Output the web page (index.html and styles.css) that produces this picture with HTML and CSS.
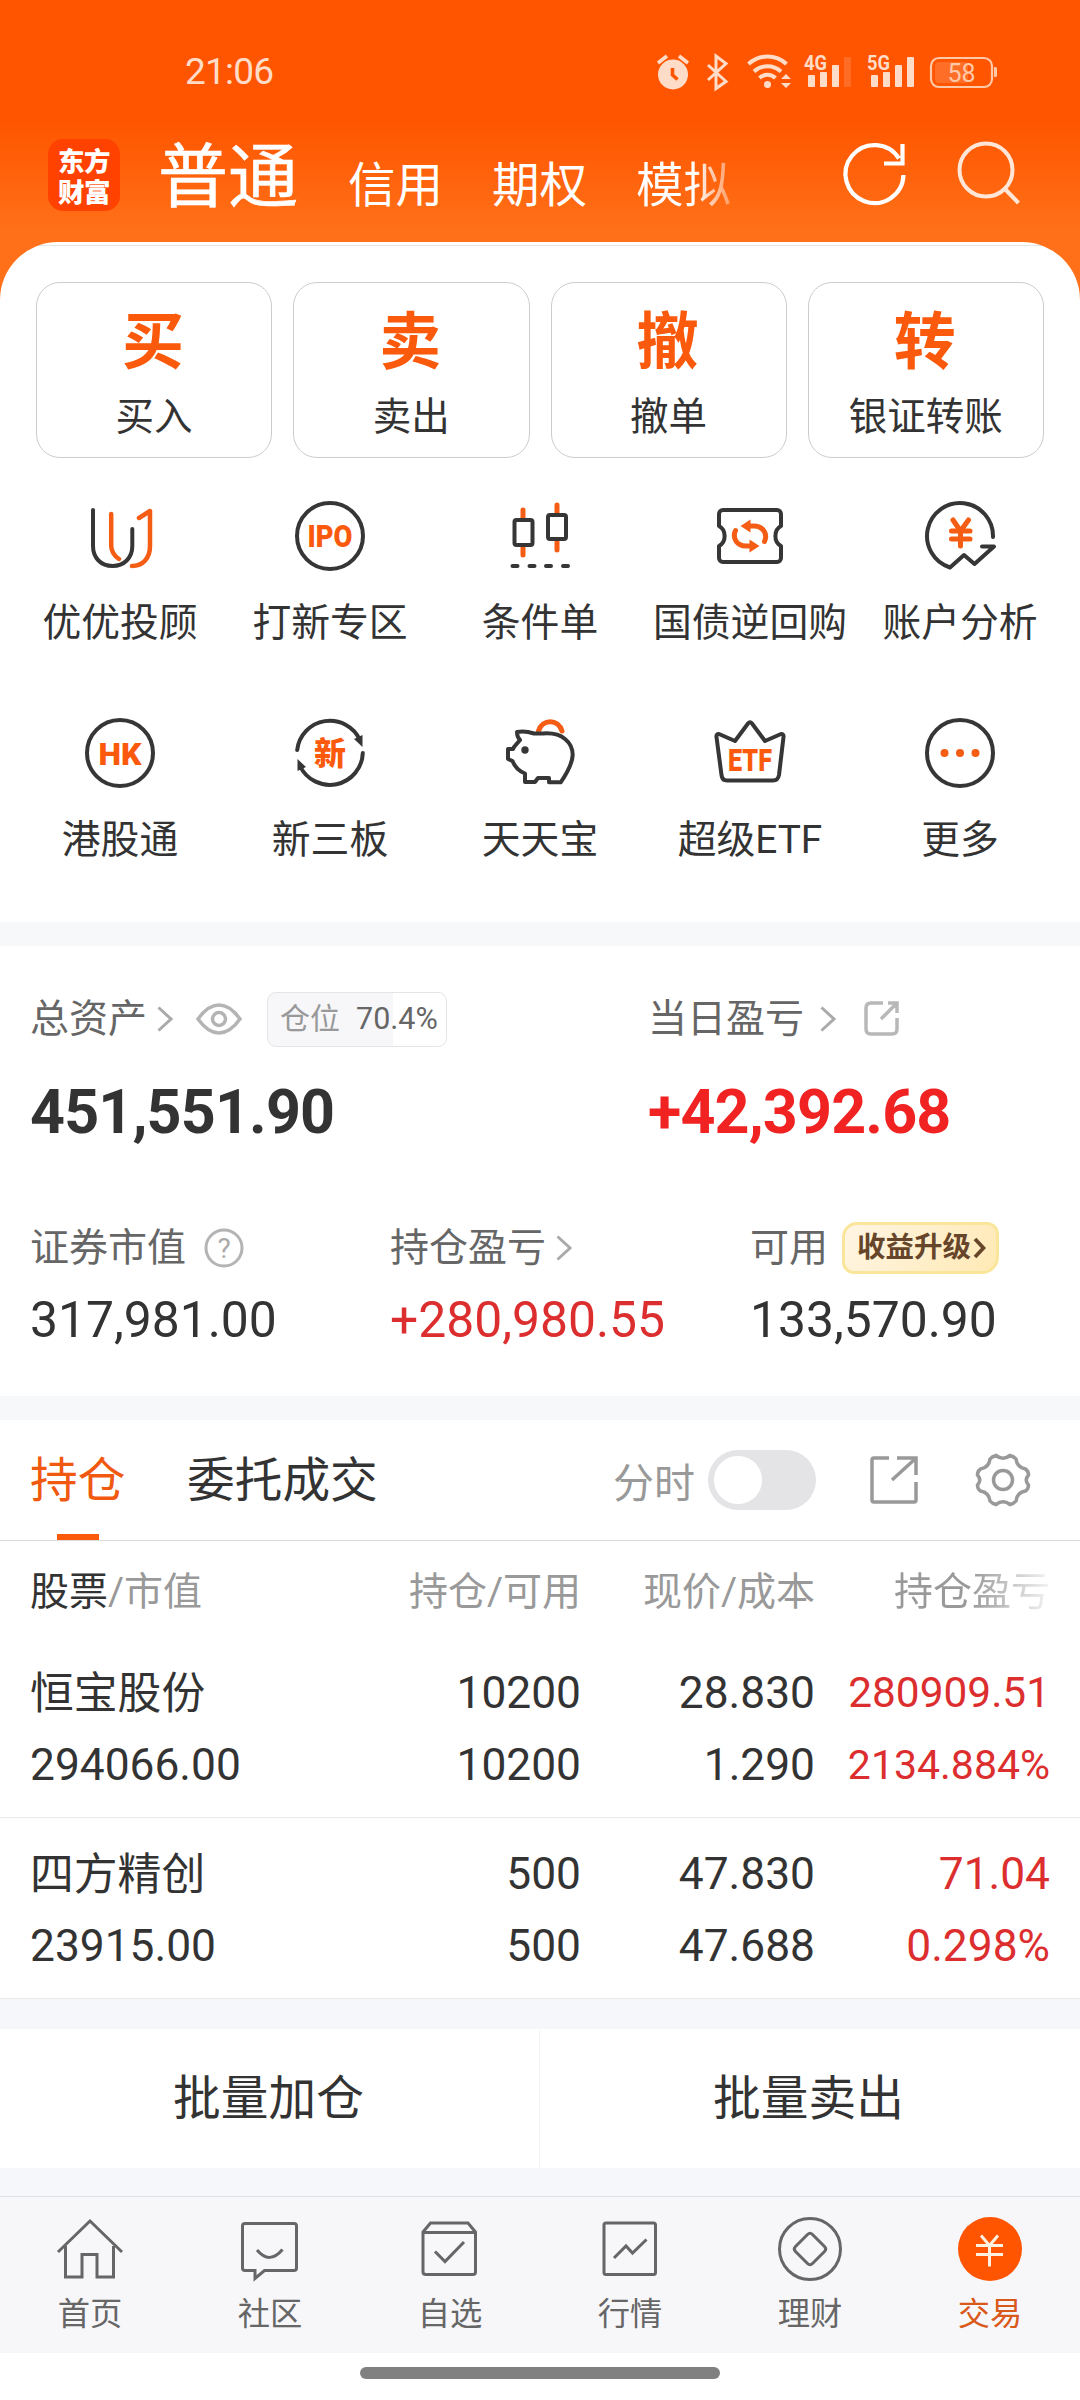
FILE: index.html
```html
<!DOCTYPE html>
<html lang="zh-CN">
<head>
<meta charset="utf-8">
<title>东方财富 交易</title>
<link rel="stylesheet" href="styles.css">
</head>
<body>
<header class="top">
  <div class="status">
    <span class="clock">21:06</span>
    <svg class="status-icons" viewBox="650 48 350 44" width="350" height="44">
      <g fill="#ffdcc8">
        <circle cx="673" cy="73.5" r="15"/>
        <path d="M658 62l9-7M688 62l-9-7" stroke="#ffdcc8" stroke-width="3.5"/>
        <path d="M672.5 67v7l5 4.500" fill="none" stroke="#ff5500" stroke-width="3.6"/>
        <path d="M708 64l18 16.500-10 7V55l10 7.500L708 79" fill="none" stroke="#ffdcc8" stroke-width="3"/>
        <path d="M748.500 63a28 28 0 0 1 38 0M754 70.500a20 20 0 0 1 27 0M759.500 77a11.500 11.500 0 0 1 16 0" fill="none" stroke="#ffdcc8" stroke-width="4"/>
        <circle cx="767.500" cy="83.500" r="3.500"/>
        <path d="M781 78l5-5 5 5zM781 82l5 5 5-5z"/>
        <text class="net" x="804" y="69" textLength="23" lengthAdjust="spacingAndGlyphs">4G</text>
        <rect x="808" y="74" width="7" height="12" rx="1"/><rect x="820" y="71" width="7" height="15" rx="1"/><rect x="832" y="64" width="7" height="22" rx="1"/><rect x="844" y="56" width="7" height="30" rx="1" opacity=".18"/>
        <text class="net" x="867" y="69" textLength="23" lengthAdjust="spacingAndGlyphs">5G</text>
        <rect x="871" y="74" width="7" height="12" rx="1"/><rect x="883" y="71" width="7" height="15" rx="1"/><rect x="895" y="64" width="7" height="22" rx="1"/><rect x="907" y="56" width="7" height="30" rx="1"/>
        <rect x="931" y="57" width="61" height="29" rx="8" fill="none" stroke="#ffc9a8" stroke-width="2.200"/>
        <rect x="935" y="61" width="33" height="21" rx="4" fill="#ff6e26"/>
        <path d="M994 66h1.500q1.500 0 1.500 1.500v7q0 1.500-1.500 1.500H994z" fill="#ffc9a8"/>
        <text class="batt" x="961.500" y="80.500" text-anchor="middle">58</text>
      </g>
    </svg>
  </div>
  <div class="bar">
    <div class="logo"><span>东方</span><span>财富</span></div>
    <nav class="modes"><span class="mode-on">普通</span><span>信用</span><span>期权</span><span class="fade">模拟</span></nav>
    <svg class="ic" width="72" height="72" fill="none" stroke="#fff" stroke-width="4.200"><path d="M64.500 36A29 29 0 1 1 60 19.500M63.500 5v19.500H45"/></svg>
    <svg class="ic" width="72" height="72" fill="none" stroke="#ffe6d6" stroke-width="4"><circle cx="33" cy="31" r="26.500"/><path d="M52 50l13.500 14"/></svg>
  </div>
</header>

<main>
<section class="sheet">
  <div class="cards">
    <div class="card"><b>买</b><span>买入</span></div>
    <div class="card"><b>卖</b><span>卖出</span></div>
    <div class="card"><b>撤</b><span>撤单</span></div>
    <div class="card"><b>转</b><span>银证转账</span></div>
  </div>
  <div class="tools">
    <div class="tool"><svg class="g" width="72" height="72"><path class="d" d="M9 10V46C9 58 17 66 28.500 66S48.300 58 48.300 46V29"/><path class="o" d="M27.200 14V46Q27.500 54 35 59M55 18L66 11V46C66 58 59 66 48 66"/></svg><span>优优投顾</span></div>
    <div class="tool"><svg class="g" width="72" height="72"><circle class="d" cx="36" cy="36" r="33"/><text x="36" y="47" textLength="45" lengthAdjust="spacingAndGlyphs">IPO</text></svg><span>打新专区</span></div>
    <div class="tool"><svg class="g" width="72" height="72"><path class="o thick" d="M19 10V18M19 47V55M53 5V13M53 42V50"/><rect class="d" x="10.500" y="20" width="18" height="25" rx="2"/><rect class="d" x="44" y="15" width="18" height="24" rx="2"/><path class="d" d="M8.500 66H13.500M25.500 66H30.500M42 66H47M59 66H64"/></svg><span>条件单</span></div>
    <div class="tool"><svg class="g" width="72" height="72"><path class="d" d="M9 10H63A4 4 0 0 1 67 14V26C59.500 30 59.500 42 67 46V58A4 4 0 0 1 63 62H9A4 4 0 0 1 5 58V46C12.500 42 12.500 30 5 26V14A4 4 0 0 1 9 10Z"/><path class="o thick" d="M36 26H40C49 26 54 34 50.500 41.500M36 46H32C23 46 18 38 21.500 30.500"/><path class="of" d="M26.500 26l10-6.500v13zM45.500 46l-10 6.500v-13z"/></svg><span>国债逆回购</span></div>
    <div class="tool"><svg class="g" width="72" height="72"><path class="d" d="M69 37A33 33 0 1 0 26 67.500L40 55L50.500 64L70 46.500H58"/><path class="o thick" d="M29 20L36.500 31L44.500 20M36.500 31V46M27.500 31H46M27.500 39H46"/></svg><span>账户分析</span></div>
    <div class="tool"><svg class="g" width="72" height="72"><circle class="d" cx="36" cy="36" r="33"/><text x="36" y="47.500" textLength="43" lengthAdjust="spacingAndGlyphs">HK</text></svg><span>港股通</span></div>
    <div class="tool"><svg class="g" width="72" height="72"><path class="d" d="M3.200 33A33 33 0 0 1 66 23M68.800 36A33 33 0 0 1 6 49"/><path class="df" d="M60 22l8.500-4 0 12zM12 50l-8.500 4 0-12z"/><text class="cn" x="36" y="48">新</text></svg><span>新三板</span></div>
    <div class="tool"><svg class="g" width="72" height="72"><path class="o thick" d="M34.500 14C38 1.500 54.500 1.500 58 14"/><path class="d body" d="M13 15Q21 13.500 30 16.500H39C59 15 68.700 26 68.700 38Q68 49 56.700 65.300H45V61H34L31 65H21V56.500Q12 53 8.500 44L4 42V32H9L10 30L16 23Q13 20 13 15Z"/><circle class="df" cx="21" cy="33" r="3.700"/></svg><span>天天宝</span></div>
    <div class="tool"><svg class="g" width="72" height="72"><path class="d" d="M5 17L21 24L34 6.500Q36 4 38 6.500L51 24L67 17Q70 17 69.500 20L65 58Q64 63.500 59 63.500H13Q8 63.500 7.500 58L2.500 20Q2 17 5 17Z"/><text x="36" y="53.500" textLength="44" lengthAdjust="spacingAndGlyphs">ETF</text></svg><span>超级ETF</span></div>
    <div class="tool"><svg class="g" width="72" height="72"><circle class="d" cx="36" cy="36" r="33"/><g class="of"><circle cx="20.500" cy="36" r="4"/><circle cx="36" cy="36" r="4"/><circle cx="51.500" cy="36" r="4"/></g></svg><span>更多</span></div>
  </div>
</section>

<section class="assets">
  <div class="row-main">
    <div>
      <div class="lab"><span>总资产</span><svg class="chev" width="16" height="26"><path d="M1.500 1.500L14 13L1.500 24.500"/></svg>
        <svg class="eye" width="46" height="34"><path d="M2 17Q12 3 23 3T44 17Q34 31 23 31T2 17Z"/><circle cx="23" cy="17" r="6.500"/></svg>
        <span class="pos"><em>仓位</em><i>70.4%</i></span></div>
      <div class="big">451,551.90</div>
    </div>
    <div>
      <div class="lab"><span>当日盈亏</span><svg class="chev far" width="16" height="26"><path d="M1.500 1.500L14 13L1.500 24.500"/></svg>
        <svg class="ext" width="36" height="36"><path d="M19 2H7Q2 2 2 7V28Q2 33 7 33H28Q33 33 33 28V17M24 2H33V12M33 2L17 18"/></svg></div>
      <div class="big red">+42,392.68</div>
    </div>
  </div>
  <div class="row-sub">
    <div><div class="lab"><span>证券市值</span><svg class="help" width="40" height="40"><circle cx="20" cy="20" r="18"/><text x="20" y="29.500">?</text></svg></div><div class="mid">317,981.00</div></div>
    <div><div class="lab"><span>持仓盈亏</span><svg class="chev" width="16" height="26"><path d="M1.500 1.500L14 13L1.500 24.500"/></svg></div><div class="mid red2">+280,980.55</div></div>
    <div><div class="lab"><span>可用</span><span class="up">收益升级<svg width="13" height="22"><path d="M2 2L10.500 11L2 20"/></svg></span></div><div class="mid">133,570.90</div></div>
  </div>
</section>

<section class="hold">
  <div class="tabs">
    <span class="tab on">持仓</span><span class="tab">委托成交</span>
    <span class="mini">分时</span><span class="toggle"></span>
    <svg class="tic out" width="48" height="48"><path d="M19 2H4Q2 2 2 4V44Q2 46 4 46H44Q46 46 46 44V26M27 2H46V19M45 3L22 24"/></svg>
    <svg class="tic" width="56" height="56"><path d="M21 3.500Q28 9 35 3.500Q39 4.500 41 7Q42 15.500 50.500 17Q53.500 19 53.500 23Q49 28 53.500 33Q53.500 37 50.500 39Q42 40.500 41 49Q39 51.500 35 52.500Q28 47 21 52.500Q17 51.500 15 49Q14 40.500 5.500 39Q2.500 37 2.500 33Q7 28 2.500 23Q2.500 19 5.500 17Q14 15.500 15 7Q17 4.500 21 3.500Z"/><circle cx="28" cy="28" r="9.500"/></svg>
  </div>
  <div class="thead"><span><b>股票</b>/市值</span><span>持仓/可用</span><span>现价/成本</span><span class="fade2">持仓盈亏</span></div>
  <div class="stock">
    <span class="nm">恒宝股份</span><span>10200</span><span>28.830</span><span class="r s1">280909.51</span>
    <span>294066.00</span><span>10200</span><span>1.290</span><span class="r s2">2134.884%</span>
  </div>
  <div class="stock last">
    <span class="nm">四方精创</span><span>500</span><span>47.830</span><span class="r">71.04</span>
    <span>23915.00</span><span>500</span><span>47.688</span><span class="r">0.298%</span>
  </div>
</section>

<section class="batch"><span>批量加仓</span><span>批量卖出</span></section>
</main>

<footer class="nav">
  <div class="item"><svg width="72" height="72"><path d="M4 39L36 8L68 39M11.500 33V64H28V41.500H43V64H59.500V33"/></svg><span>首页</span></div>
  <div class="item"><svg width="72" height="72"><path d="M11 10.500H60Q62.500 10.500 62.500 13V55Q62.500 57.500 60 57.500H30.500L21 65.500V57.500H11Q8.500 57.500 8.500 55V13Q8.500 10.500 11 10.500ZM23 37Q35.500 52 48.500 36.500"/></svg><span>社区</span></div>
  <div class="item"><svg width="72" height="72"><path d="M9 19L16.500 10H54L61.500 19V59Q61.500 61.500 59 61.500H12Q9 61.500 9 59ZM9 19.500H61.500M21 38.500L31 48.500L50 29"/></svg><span>自选</span></div>
  <div class="item"><svg width="72" height="72"><rect x="10" y="10" width="51.500" height="51.500" rx="2"/><path d="M20 45L32 33L38.500 40L52.500 26.500"/></svg><span>行情</span></div>
  <div class="item"><svg width="72" height="72"><circle cx="36" cy="36" r="30.500"/><path d="M33.500 21.500Q36 19 38.500 21.500L50.500 33.500Q53 36 50.500 38.500L38.500 50.500Q36 53 33.500 50.500L21.500 38.500Q19 36 21.500 33.500Z"/></svg><span>理财</span></div>
  <div class="item active"><svg width="72" height="72"><circle cx="36" cy="36" r="32"/><path d="M27 22.500L35.500 32.500L44 22.500M35.500 32.500V53.500M22 32.500H49M22 41.500H49"/></svg><span>交易</span></div>
</footer>
<div class="home-ind"></div>
</body>
</html>
```
FILE: styles.css
```css
* { box-sizing: border-box; }
body { margin: 0; width: 1080px; height: 2400px; overflow: hidden; background: #fff; color: #333; font-family: Roboto, "Noto Sans CJK SC", sans-serif; }
svg { display: block; flex: none; }
em, i { font-style: normal; }

.top { height: 300px; background: linear-gradient(#ff5500 0, #ff5500 120px, #ff7018 230px); color: #fff; }
.status { height: 118px; padding: 24px 80px 0 185px; display: flex; justify-content: space-between; align-items: center; }
.clock { font-size: 37px; letter-spacing: -.8px; color: #ffdcc8; }
.net { font-size: 21px; font-weight: 700; }
.batt { font-size: 25px; fill: #ffc9a8; }
.bar { height: 114px; padding-left: 48px; display: flex; align-items: center; }
.logo { width: 72px; height: 72px; flex: none; border-radius: 15px; background: #ff4200; font-family: "Noto Sans CJK SC", sans-serif; font-weight: 900; font-size: 26.500px; line-height: 31px; display: flex; flex-direction: column; justify-content: center; align-items: center; letter-spacing: -.5px; }
.modes { width: 719px; flex: none; padding: 13px 0 0 38px; display: flex; align-items: baseline; gap: 49px; font-size: 47.500px; line-height: 82px; }
.mode-on { font-size: 70px; margin-right: 1px; -webkit-text-stroke: .6px #fff; }
.fade { background: linear-gradient(90deg, #fff 60%, rgba(255,255,255,.35) 100%); -webkit-background-clip: text; background-clip: text; color: transparent; }
.ic + .ic { margin-left: 42px; }

.sheet { height: 680px; margin-top: -58px; border-radius: 58px 58px 0 0; background: linear-gradient(#fff 3px, #e6e6e6 3px, #e6e6e6 4px, #fff 4px); padding-top: 40px; }
.cards { display: grid; grid-template-columns: repeat(4, 1fr); gap: 21px; padding: 0 36px; }
.card { height: 176px; border: 1px solid #ccc; border-radius: 24px; display: flex; flex-direction: column; align-items: center; }
.card b { font-size: 62px; line-height: 64px; margin: 28px 2px 0 0; font-weight: 700; color: #fb5a0c; }
.card span { font-size: 38.500px; line-height: 44px; margin-top: 20px; }
.tools { display: grid; grid-template-columns: repeat(5, 210px); justify-content: center; grid-auto-rows: 217px; margin-top: 42px; }
.tool { display: flex; flex-direction: column; align-items: center; font-size: 38.800px; line-height: 48px; white-space: nowrap; }
.tool span { margin-top: 27px; }
.g .d { fill: none; stroke: #363636; stroke-width: 4; stroke-linecap: round; stroke-linejoin: round; }
.g .body { fill: #fff; }
.g .o { fill: none; stroke: #f45d13; stroke-width: 4.500; stroke-linecap: round; stroke-linejoin: round; }
.g .thick { stroke-width: 5; }
.g .of { fill: #f45d13; }
.g .df { fill: #363636; }
.g text { fill: #fb5a0c; font: 900 32px Roboto, sans-serif; text-anchor: middle; }
.g .cn { font: 900 32px "Noto Sans CJK SC", sans-serif; }

.assets { height: 498px; border-top: 24px solid #f7f8fa; border-bottom: 24px solid #f7f8fa; padding: 0 30px; }
.row-main { display: grid; grid-template-columns: 618px 1fr; padding-top: 45px; }
.row-sub { display: grid; grid-template-columns: repeat(3, 360px); padding-top: 73px; }
.lab { height: 56px; display: flex; align-items: center; font-size: 39px; line-height: 56px; color: #666; white-space: nowrap; }
.chev { margin-left: 10px; fill: none; stroke: #aaa; stroke-width: 3; }
.far { margin-left: 16px; }
.eye { margin-left: 23px; fill: none; stroke: #b4b4b4; stroke-width: 3.500; }
.ext { margin-left: 28px; fill: none; stroke: #b8b8b8; stroke-width: 3.500; }
.pos { width: 180px; height: 55px; margin-left: 25px; padding-left: 12px; border: 1.500px solid #e4e4e6; border-radius: 9px; background: linear-gradient(90deg, #f7f7fa 70.4%, #fff 70.4%); display: flex; align-items: center; font-size: 30px; line-height: 50px; }
.pos em { color: #999; }
.pos i { margin-left: 16px; font-size: 30.500px; }
.big { font-size: 61px; line-height: 70px; font-weight: 700; margin-top: 30px; letter-spacing: -.85px; }
.red { color: #f02222; }
.mid { font-size: 49.800px; line-height: 60px; margin-top: 14px; }
.red2 { color: #dc2e2e; }
.help { margin-left: 18px; fill: none; stroke: #b4b4b4; stroke-width: 3; }
.help text { font-size: 28px; text-anchor: middle; fill: #aaa; stroke: none; }
.up { height: 52px; margin-left: 14px; padding: 0 10px 0 12px; border: 3px solid #fae69a; border-radius: 15px 12px 17px 12px; background: linear-gradient(120deg, #fff5e3, #ffe9b5); color: #66452a; font-size: 28.500px; line-height: 46px; font-weight: 700; display: flex; align-items: center; gap: 2px; }
.up svg { fill: none; stroke: #66452a; stroke-width: 3.800; }

.tabs { height: 121px; border-bottom: 1px solid #dcdcdc; padding-left: 30px; display: flex; align-items: center; font-size: 47.700px; white-space: nowrap; }
.tab { height: 120px; line-height: 123px; }
.on { width: 96px; margin-right: 61px; color: #f0590f; background: linear-gradient(#fb5a0c, #fb5a0c) 27px 114px / 42px 6px no-repeat; }
.mini { margin-left: auto; font-size: 41px; color: #999; }
.toggle { width: 108px; height: 60px; margin: 0 54px 0 13px; border-radius: 30px; background: radial-gradient(circle at 30px 30px, #fff 23.500px, #e4e4e7 24.500px); }
.tic { margin-right: 49px; fill: none; stroke: #999; stroke-width: 3.500; }
.out { margin-right: 57px; }
.thead, .stock { display: grid; grid-template-columns: 330px 221px 234px 235px; padding: 0 30px; text-align: right; }
.thead > :first-child, .stock > :nth-child(4n+1) { text-align: left; }
.thead { height: 104px; line-height: 102px; font-size: 39px; color: #999; }
.thead b { font-weight: 400; color: #333; }
.fade2 { background: linear-gradient(90deg, #999 66%, #eee 98%); -webkit-background-clip: text; background-clip: text; color: transparent; }
.stock { height: 173px; padding-top: 12px; font-size: 44.300px; line-height: 72px; grid-auto-rows: 72px; border-bottom: 1px solid #ebebeb; }
.stock + .stock { height: 181px; padding-top: 20px; }
.nm { font-size: 43.800px; line-height: 74px; }
.r { color: #dc2e2e; }
.s1 { font-size: 42.400px; }
.s2 { font-size: 41px; }

.batch { height: 197px; border: solid #f6f7fa; border-width: 30px 0 28px; display: grid; grid-template-columns: 1fr 1fr; text-align: center; font-size: 47.700px; line-height: 141px; }
.batch span { padding-right: 3px; }
.batch span + span { box-shadow: -1px 0 #f4f4f6; }

.nav { height: 157px; border-top: 1px solid #dfe3e5; background: #f7f7fa; display: grid; grid-template-columns: repeat(6, 1fr); }
.item { display: flex; flex-direction: column; align-items: center; padding-top: 16px; color: #666; font-size: 32.300px; line-height: 40px; }
.item span { margin-top: 9px; }
.item svg { fill: none; stroke: #666; stroke-width: 3; }
.active { color: #d9591a; }
.active svg circle { fill: #ff5500; stroke: none; }
.active svg path { stroke: #fff0df; }
.home-ind { width: 360px; height: 12px; margin: 14px auto 0; border-radius: 6px; background: #808080; }
```
